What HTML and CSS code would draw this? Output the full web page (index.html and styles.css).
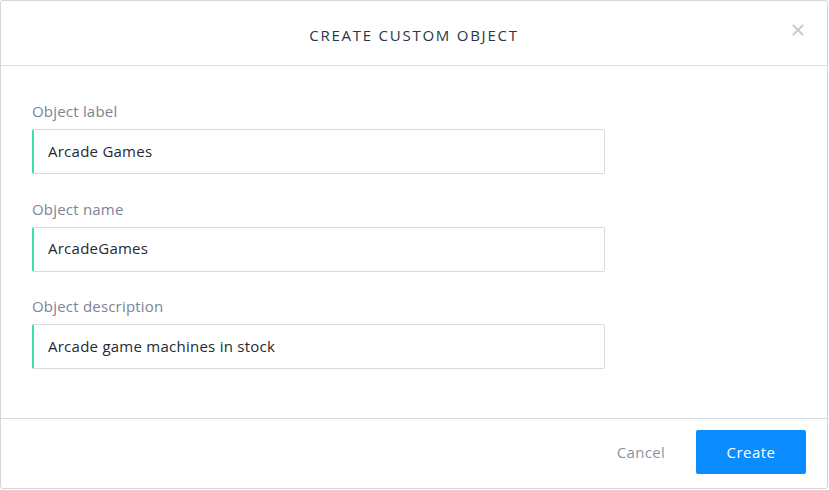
FILE: index.html
```html
<!DOCTYPE html>
<html>
<head>
<meta charset="utf-8">
<link rel="stylesheet" href="styles.css">
</head>
<body>
<div class="dialog">
  <div class="header">
    <h1 class="title">CREATE CUSTOM OBJECT</h1>
    <button class="close" aria-label="Close">
      <svg width="12" height="12" viewBox="0 0 12 12"><path d="M1.5 1.5 L10.5 10.5 M10.5 1.5 L1.5 10.5" stroke="#c9ccd6" stroke-width="2.2" stroke-linecap="round"/></svg>
    </button>
  </div>
  <div class="body">
    <div class="field">
      <label class="label">Object label</label>
      <div class="input">Arcade Games</div>
    </div>
    <div class="field">
      <label class="label">Object name</label>
      <div class="input">ArcadeGames</div>
    </div>
    <div class="field">
      <label class="label">Object description</label>
      <div class="input">Arcade game machines in stock</div>
    </div>
  </div>
  <div class="footer">
    <button class="cancel">Cancel</button>
    <button class="create">Create</button>
  </div>
</div>
</body>
</html>
```
FILE: styles.css
```css
html, body {
  margin: 0;
  padding: 0;
  background: #ffffff;
}
body {
  font-family: "Open Sans", Lato, "Liberation Sans", sans-serif;
}
.dialog {
  box-sizing: border-box;
  width: 828px;
  height: 489px;
  border: 1px solid #d3d5dc;
  border-radius: 3px;
  display: flex;
  flex-direction: column;
  background: #fff;
}
.header {
  box-sizing: border-box;
  position: relative;
  height: 65px;
  border-bottom: 1px solid #dcdee4;
  display: flex;
  align-items: center;
  justify-content: center;
  flex: none;
}
.title {
  margin: 0;
  font-size: 15px;
  font-weight: 400;
  letter-spacing: 1.75px;
  color: #2b3545;
  padding-top: 3px;
}
.close {
  position: absolute;
  right: 23px;
  top: 23px;
  border: 0;
  background: none;
  padding: 0;
  width: 12px;
  height: 12px;
  display: flex;
}
.body {
  flex: 1;
  padding: 35px 31px 0 31px;
  display: flex;
  flex-direction: column;
  gap: 24.5px;
}
.field {
  display: flex;
  flex-direction: column;
  gap: 8px;
}
.label {
  font-size: 15px;
  line-height: 20px;
  letter-spacing: 0.2px;
  color: #7d8494;
}
.input {
  box-sizing: border-box;
  width: 573px;
  height: 45px;
  border: 1px solid #d8dae1;
  border-left: 2px solid #3dddb3;
  border-radius: 2px;
  padding: 0 14px 2px 14px;
  display: flex;
  align-items: center;
  font-size: 15px;
  letter-spacing: 0.25px;
  color: #232a33;
}
.footer {
  box-sizing: border-box;
  flex: none;
  height: 70px;
  border-top: 1px solid #d6d8df;
  display: flex;
  align-items: center;
  justify-content: flex-end;
  padding: 0 21px 3px 0;
  gap: 31px;
}
.cancel {
  border: 0;
  background: none;
  font-family: inherit;
  font-size: 15px;
  letter-spacing: 0.3px;
  color: #8d93a3;
  padding: 0;
}
.create {
  width: 110px;
  height: 44px;
  border: 0;
  border-radius: 2px;
  background: #0a8cff;
  color: #fff;
  font-family: inherit;
  font-size: 15px;
  letter-spacing: 0.5px;
  padding: 0;
}
```
